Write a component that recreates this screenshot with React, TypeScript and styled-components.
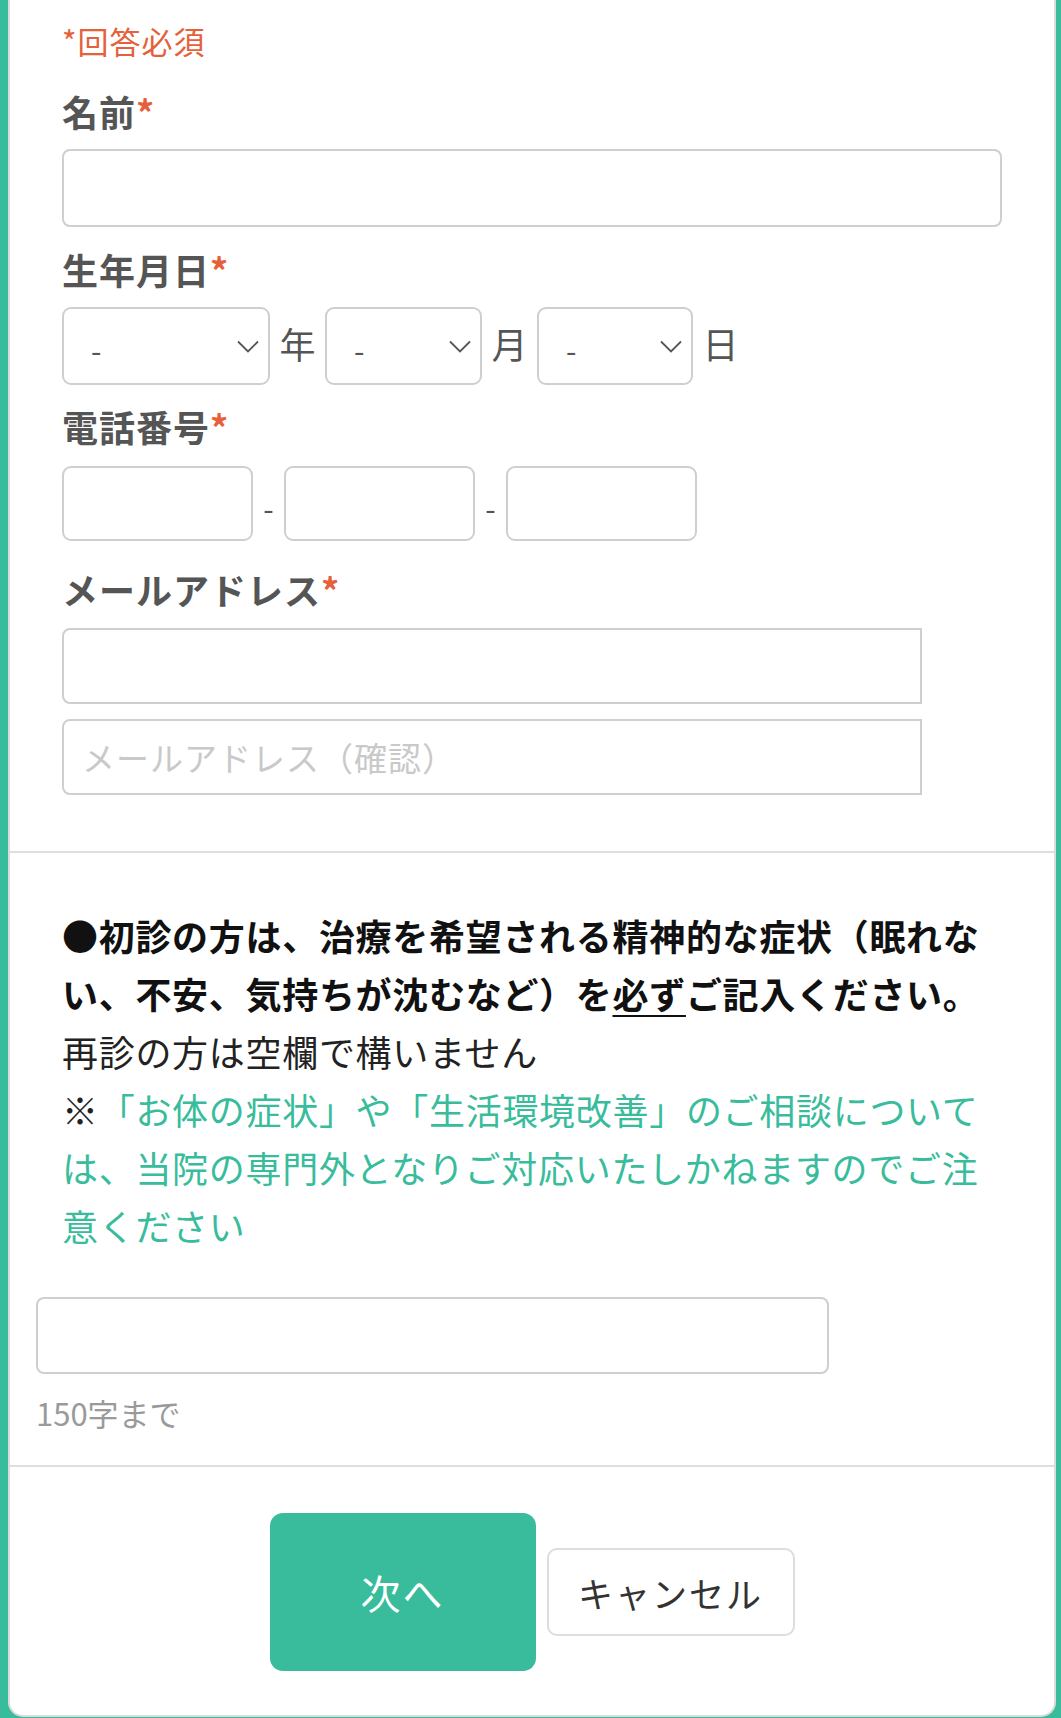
import React from 'react'
import styled, { createGlobalStyle } from 'styled-components'

const GREEN = '#38bc9c'
const LABEL = '#555555'
const REQUIRED = '#e5613b'
const BORDER = '#cfcfcf'

const GlobalStyle = createGlobalStyle`
  html, body {
    margin: 0;
    padding: 0;
    background: ${GREEN};
  }
  body {
    font-family: 'Noto Sans CJK JP', 'Noto Sans', sans-serif;
    color: #222;
  }
  * {
    box-sizing: border-box;
  }
`

type FieldProps = {
  label: string
  top: number
  labelGap?: number
  children: React.ReactNode
}

function Field({ label, top, labelGap = 13, children }: FieldProps) {
  return (
    <FieldBlock $top={top}>
      <Label $gap={labelGap}>
        {label}
        <Asterisk>*</Asterisk>
      </Label>
      {children}
    </FieldBlock>
  )
}

function Chevron() {
  return (
    <ChevronIcon viewBox="0 0 22 13" aria-hidden="true">
      <polyline points="1,1.5 11,11.5 21,1.5" fill="none" stroke="#555" strokeWidth="1.8" />
    </ChevronIcon>
  )
}

function DateSelect({ width }: { width: number }) {
  return (
    <SelectWrap $width={width}>
      <Select defaultValue="-">
        <option value="-">-</option>
      </Select>
      <Chevron />
    </SelectWrap>
  )
}

export default function App() {
  return (
    <>
      <GlobalStyle />
      <Page>
        <Card>
          <FormSection>
            <RequiredNote>*回答必須</RequiredNote>

            <Field label="名前" top={20}>
              <TextInput type="text" />
            </Field>

            <Field label="生年月日" top={17}>
              <Row>
                <DateSelect width={208} />
                <Unit>年</Unit>
                <DateSelect width={157} />
                <Unit>月</Unit>
                <DateSelect width={156} />
                <Unit>日</Unit>
              </Row>
            </Field>

            <Field label="電話番号" top={16} labelGap={15}>
              <Row>
                <PhoneInput type="tel" />
                <Dash>-</Dash>
                <PhoneInput type="tel" />
                <Dash>-</Dash>
                <PhoneInput type="tel" />
              </Row>
            </Field>

            <Field label="メールアドレス" top={23} labelGap={14}>
              <EmailStack>
                <EmailInput type="email" />
                <EmailInput type="email" placeholder="メールアドレス（確認）" />
              </EmailStack>
            </Field>
          </FormSection>

          <NoticeSection>
            <Notice>
              <Strong>
                ●初診の方は、治療を希望される精神的な症状（眠れな
                <br />
                い、不安、気持ちが沈むなど）を<Underline>必ず</Underline>ご記入ください。
              </Strong>
              <br />
              再診の方は空欄で構いません
              <br />
              ※<Accent>
                「お体の症状」や「生活環境改善」のご相談について
                <br />
                は、当院の専門外となりご対応いたしかねますのでご注
                <br />
                意ください
              </Accent>
            </Notice>
            <SymptomInput type="text" />
            <Counter>150字まで</Counter>
          </NoticeSection>

          <Actions>
            <PrimaryButton type="button">次へ</PrimaryButton>
            <SecondaryButton type="button">キャンセル</SecondaryButton>
          </Actions>
        </Card>
      </Page>
    </>
  )
}

const Page = styled.div`
  background: ${GREEN};
  padding: 0 5px 0 8px;
`

const Card = styled.div`
  background: #fff;
  border: 2px solid #dcdcdc;
  border-top: none;
  border-radius: 0 0 15px 15px;
  overflow: hidden;
`

const FormSection = styled.section`
  padding: 16px 52px 56px 52px;
`

const RequiredNote = styled.p`
  margin: 0;
  color: ${REQUIRED};
  font-size: 31px;
  line-height: 50px;
  letter-spacing: 1px;
`

const FieldBlock = styled.div<{ $top: number }>`
  margin-top: ${p => p.$top}px;
`

const Label = styled.div<{ $gap: number }>`
  margin-bottom: ${p => p.$gap}px;
  color: ${LABEL};
  font-size: 36px;
  font-weight: 700;
  line-height: 50px;
  letter-spacing: 1px;
`

const Asterisk = styled.span`
  color: ${REQUIRED};
`

const inputBase = `
  display: block;
  margin: 0;
  border: 2px solid ${BORDER};
  background: #fff;
  font-family: inherit;
  font-size: 32px;
  color: #333;
  outline: none;
`

const TextInput = styled.input`
  ${inputBase}
  width: 100%;
  height: 78px;
  border-radius: 8px;
  padding: 0 24px;
`

const Row = styled.div`
  display: flex;
  align-items: center;
`

const SelectWrap = styled.div<{ $width: number }>`
  position: relative;
  width: ${p => p.$width}px;
  height: 78px;
`

const Select = styled.select`
  ${inputBase}
  appearance: none;
  width: 100%;
  height: 100%;
  border-radius: 9px;
  padding: 6px 0 0 27px;
  color: ${LABEL};
  font-size: 30px;
`

const ChevronIcon = styled.svg`
  position: absolute;
  right: 11px;
  top: 33px;
  width: 22px;
  height: 13px;
  pointer-events: none;
`

const Unit = styled.span`
  width: 55px;
  text-align: center;
  color: ${LABEL};
  font-size: 36px;
  line-height: 1;
  padding-bottom: 6px;
`

const PhoneInput = styled.input`
  ${inputBase}
  width: 191px;
  height: 75px;
  border-radius: 9px;
  padding: 0 16px;
`

const Dash = styled.span`
  width: 31px;
  text-align: center;
  color: ${LABEL};
  font-size: 30px;
  padding-top: 6px;
`

const EmailStack = styled.div`
  display: flex;
  flex-direction: column;
  gap: 15px;
`

const EmailInput = styled.input`
  ${inputBase}
  width: 860px;
  height: 76px;
  border-radius: 8px 0 0 8px;
  padding: 0 18px;
  font-size: 33px;
  letter-spacing: 1px;

  &::placeholder {
    color: #c9c9c9;
  }
`

const NoticeSection = styled.section`
  border-top: 2px solid #dedede;
  padding: 53px 26px 32px;
`

const Notice = styled.p`
  margin: 0;
  padding-left: 26px;
  font-size: 36px;
  line-height: 58px;
  letter-spacing: 0.7px;
  color: #222;
  white-space: nowrap;
`

const Strong = styled.strong`
  font-weight: 700;
  color: #111;
`

const Underline = styled.span`
  text-decoration: underline;
  text-underline-offset: 6px;
  text-decoration-thickness: 2px;
`

const Accent = styled.span`
  color: ${GREEN};
`

const SymptomInput = styled.input`
  ${inputBase}
  margin-top: 43px;
  width: 793px;
  height: 77px;
  border-radius: 8px;
  padding: 0 20px;
`

const Counter = styled.div`
  margin-top: 19px;
  color: #9a9a9a;
  font-size: 31px;
  line-height: 40px;
`

const Actions = styled.div`
  border-top: 2px solid #dedede;
  padding: 46px 0 44px;
  display: flex;
  justify-content: center;
  align-items: center;
  gap: 11px;
`

const PrimaryButton = styled.button`
  width: 266px;
  height: 158px;
  border: none;
  border-radius: 13px;
  background: ${GREEN};
  color: #fff;
  font-family: inherit;
  font-size: 40px;
  letter-spacing: 2px;
  cursor: pointer;
`

const SecondaryButton = styled.button`
  width: 248px;
  height: 88px;
  border: 2px solid #dddddd;
  border-radius: 10px;
  background: #fff;
  color: #333;
  font-family: inherit;
  font-size: 35px;
  letter-spacing: 2px;
  cursor: pointer;
`
